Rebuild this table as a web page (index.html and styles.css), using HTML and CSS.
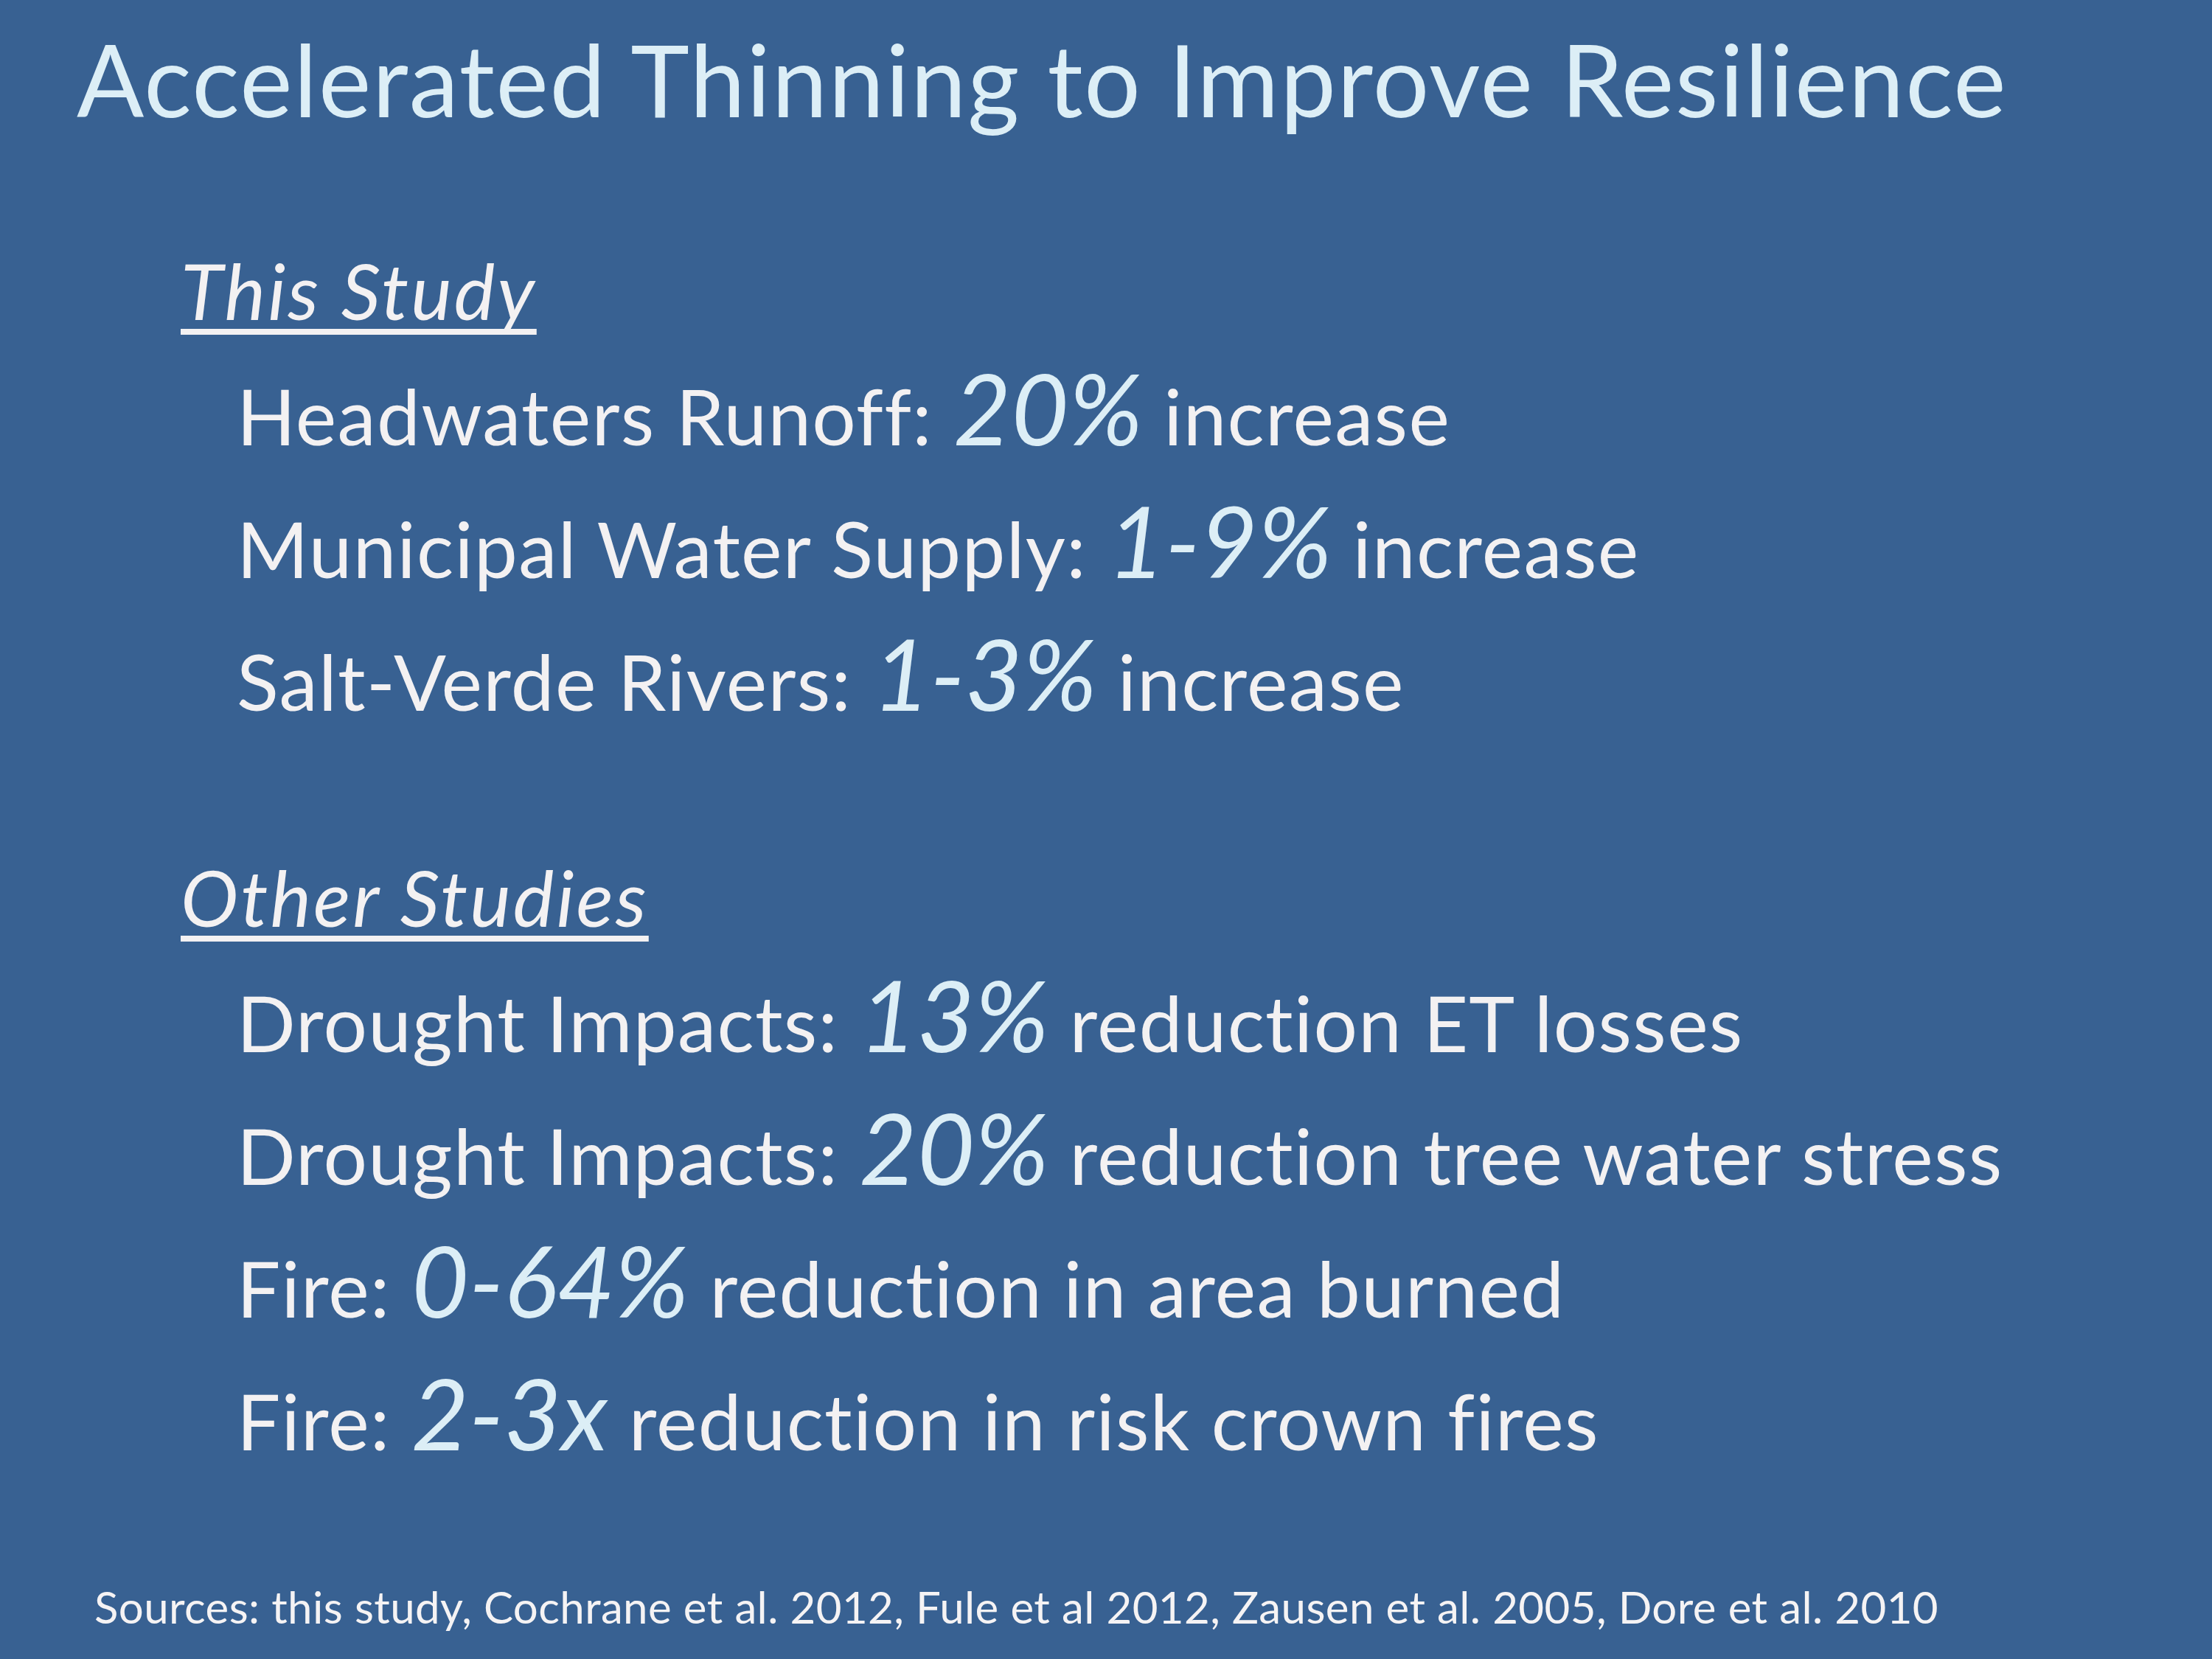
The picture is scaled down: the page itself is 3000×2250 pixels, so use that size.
FILE: index.html
```html
<!DOCTYPE html>
<html lang="en">
<head>
<meta charset="utf-8">
<title>Accelerated Thinning to Improve Resilience</title>
<link rel="stylesheet" href="styles.css">
</head>
<body>
<div class="slide">
  <h1 class="title">Accelerated Thinning to Improve Resilience</h1>
  <div class="content">
    <section class="group">
      <h2 class="group-head"><span class="u">This Study</span></h2>
      <p class="line">Headwaters Runoff: <span class="num">20%</span> increase</p>
      <p class="line">Municipal Water Supply: <span class="num">1-9%</span> increase</p>
      <p class="line">Salt-Verde Rivers: <span class="num">1-3%</span> increase</p>
    </section>
    <section class="group group-second">
      <h2 class="group-head"><span class="u">Other Studies</span></h2>
      <p class="line">Drought Impacts: <span class="num">13%</span> reduction ET losses</p>
      <p class="line">Drought Impacts: <span class="num">20%</span> reduction tree water stress</p>
      <p class="line">Fire: <span class="num">0-64%</span> reduction in area burned</p>
      <p class="line">Fire: <span class="num">2-3x</span> reduction in risk crown fires</p>
    </section>
  </div>
  <p class="sources">Sources: this study, Cochrane et al. 2012, Fule et al 2012, Zausen et al. 2005, Dore et al. 2010</p>
</div>
</body>
</html>
```

FILE: styles.css
```css
html, body {
  margin: 0;
  padding: 0;
  background: #386192;
}

.slide {
  width: 3000px;
  height: 2250px;
  box-sizing: border-box;
  padding-top: 32px;
  padding-bottom: 31px;
  background: #386192;
  font-family: "Lato", "Open Sans", sans-serif;
  font-variant-ligatures: none;
  display: flex;
  flex-direction: column;
}

.title {
  margin: 0;
  padding-left: 104px;
  font-size: 135px;
  line-height: 150px;
  font-weight: 400;
  letter-spacing: 1.75px;
  color: #dceef6;
  white-space: nowrap;
}

.content {
  padding-left: 245px;
  margin-top: 131px;
}

.group {
  margin: 0;
}

.group-second {
  margin-top: 123px;
}

.group-head {
  margin: 0;
  font-size: 105px;
  line-height: 160px;
  font-weight: 400;
  font-style: italic;
  letter-spacing: 3px;
  color: #f3f1f2;
}

.u {
  text-decoration: underline;
  text-decoration-thickness: 8px;
  text-underline-offset: 12px;
  text-decoration-skip-ink: none;
}

.line {
  margin: 0;
  padding-left: 76px;
  font-size: 105px;
  line-height: 180px;
  height: 180px;
  letter-spacing: 1.3px;
  color: #f3f1f2;
  white-space: nowrap;
}

.num {
  font-size: 135px;
  line-height: 1;
  font-style: italic;
  letter-spacing: 0;
  color: #dceef6;
}

.sources {
  margin: auto 0 0 0;
  padding-left: 128px;
  font-size: 60px;
  line-height: 80px;
  letter-spacing: 0.4px;
  color: #f5f3f4;
  white-space: nowrap;
}
```
